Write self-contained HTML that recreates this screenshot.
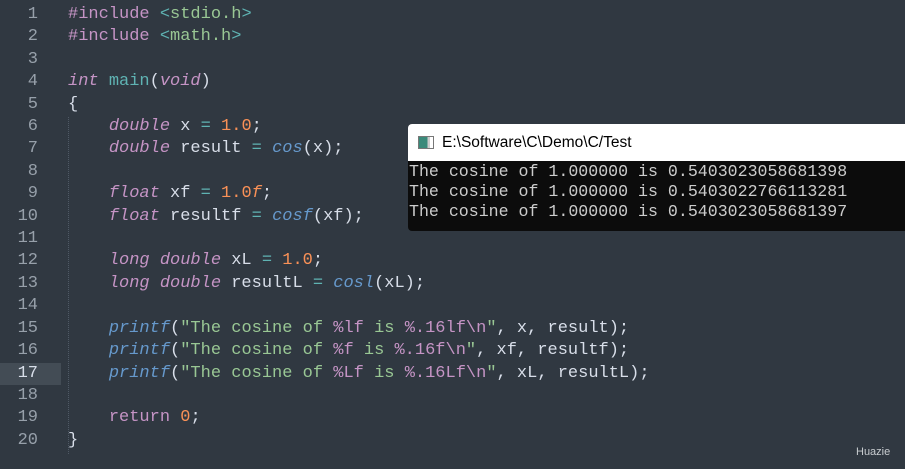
<!DOCTYPE html>
<html><head><meta charset="utf-8"><style>
body{margin:0;width:905px;height:469px;background:#303841;overflow:hidden;position:relative;font-family:"Liberation Mono",monospace;}
.num{position:absolute;left:0;width:38px;text-align:right;font-size:17px;color:#97a0aa;line-height:22.4px;}
.code{position:absolute;left:68px;font-size:17px;line-height:22.4px;white-space:pre;color:#d8dee9;}
.k{color:#c594c5}.i{color:#c594c5;font-style:italic}.f{color:#5fb3b3}.s{color:#99c794}.o{color:#f99157}.b{color:#6699cc;font-style:italic}.op{color:#5fb3b3}
.hl{position:absolute;left:0;top:363px;width:61px;height:22px;background:#434c55}
.guide{position:absolute;left:68px;top:117px;height:337px;border-left:1px dotted #4f5965}
.win{position:absolute;left:408px;top:124px;width:497px;height:107px;background:#0c0c0c;border-radius:4px 0 0 4px;overflow:hidden}
.tb{height:37px;background:#fff;font-family:"Liberation Sans",sans-serif;font-size:15.5px;color:#000;line-height:37px;padding-left:34px;position:relative}
.ic{position:absolute;left:10px;top:12px;width:14px;height:11px;border:1px solid #777;background:linear-gradient(90deg,#3a8a7a 0 60%,#ccc 60% 80%,#fff 80%)}
.con{color:#cccccc;font-size:16.6px;line-height:20px;padding-left:1px;white-space:pre;font-family:"Liberation Mono",monospace;padding-top:1px}
.wm{position:absolute;left:856px;top:446px;font-family:"Liberation Sans",sans-serif;font-size:11px;color:#c8ccd0}
</style></head><body>
<div class="hl"></div>
<div class="guide"></div>
<div class="num" style="top:4px">1<br>2<br>3<br>4<br>5<br>6<br>7<br>8<br>9<br>10<br>11<br>12<br>13<br>14<br>15<br>16<br><span style="color:#d8dee9">17</span><br>18<br>19<br>20</div>
<div class="code" style="top:4px"><span class="k">#include</span> <span class="s"><span class="op">&lt;</span>stdio.h<span class="op">&gt;</span></span>
<span class="k">#include</span> <span class="s"><span class="op">&lt;</span>math.h<span class="op">&gt;</span></span>

<span class="i">int</span> <span class="f">main</span>(<span class="i">void</span>)
{
    <span class="i">double</span> x <span class="op">=</span> <span class="o">1.0</span>;
    <span class="i">double</span> result <span class="op">=</span> <span class="b">cos</span>(x);

    <span class="i">float</span> xf <span class="op">=</span> <span class="o">1.0<i>f</i></span>;
    <span class="i">float</span> resultf <span class="op">=</span> <span class="b">cosf</span>(xf);

    <span class="i">long double</span> xL <span class="op">=</span> <span class="o">1.0</span>;
    <span class="i">long double</span> resultL <span class="op">=</span> <span class="b">cosl</span>(xL);

    <span class="b">printf</span>(<span class="s">"The cosine of <span class="k">%lf</span> is <span class="k">%.16lf</span><span class="k">\n</span>"</span>, x, result);
    <span class="b">printf</span>(<span class="s">"The cosine of <span class="k">%f</span> is <span class="k">%.16f</span><span class="k">\n</span>"</span>, xf, resultf);
    <span class="b">printf</span>(<span class="s">"The cosine of <span class="k">%Lf</span> is <span class="k">%.16Lf</span><span class="k">\n</span>"</span>, xL, resultL);

    <span class="k">return</span> <span class="o">0</span>;
}</div>
<div class="win"><div class="tb"><div class="ic"></div>E:\Software\C\Demo\C/Test</div>
<div class="con">The cosine of 1.000000 is 0.5403023058681398
The cosine of 1.000000 is 0.5403022766113281
The cosine of 1.000000 is 0.5403023058681397</div></div>
<div class="wm">Huazie</div>
</body></html>
